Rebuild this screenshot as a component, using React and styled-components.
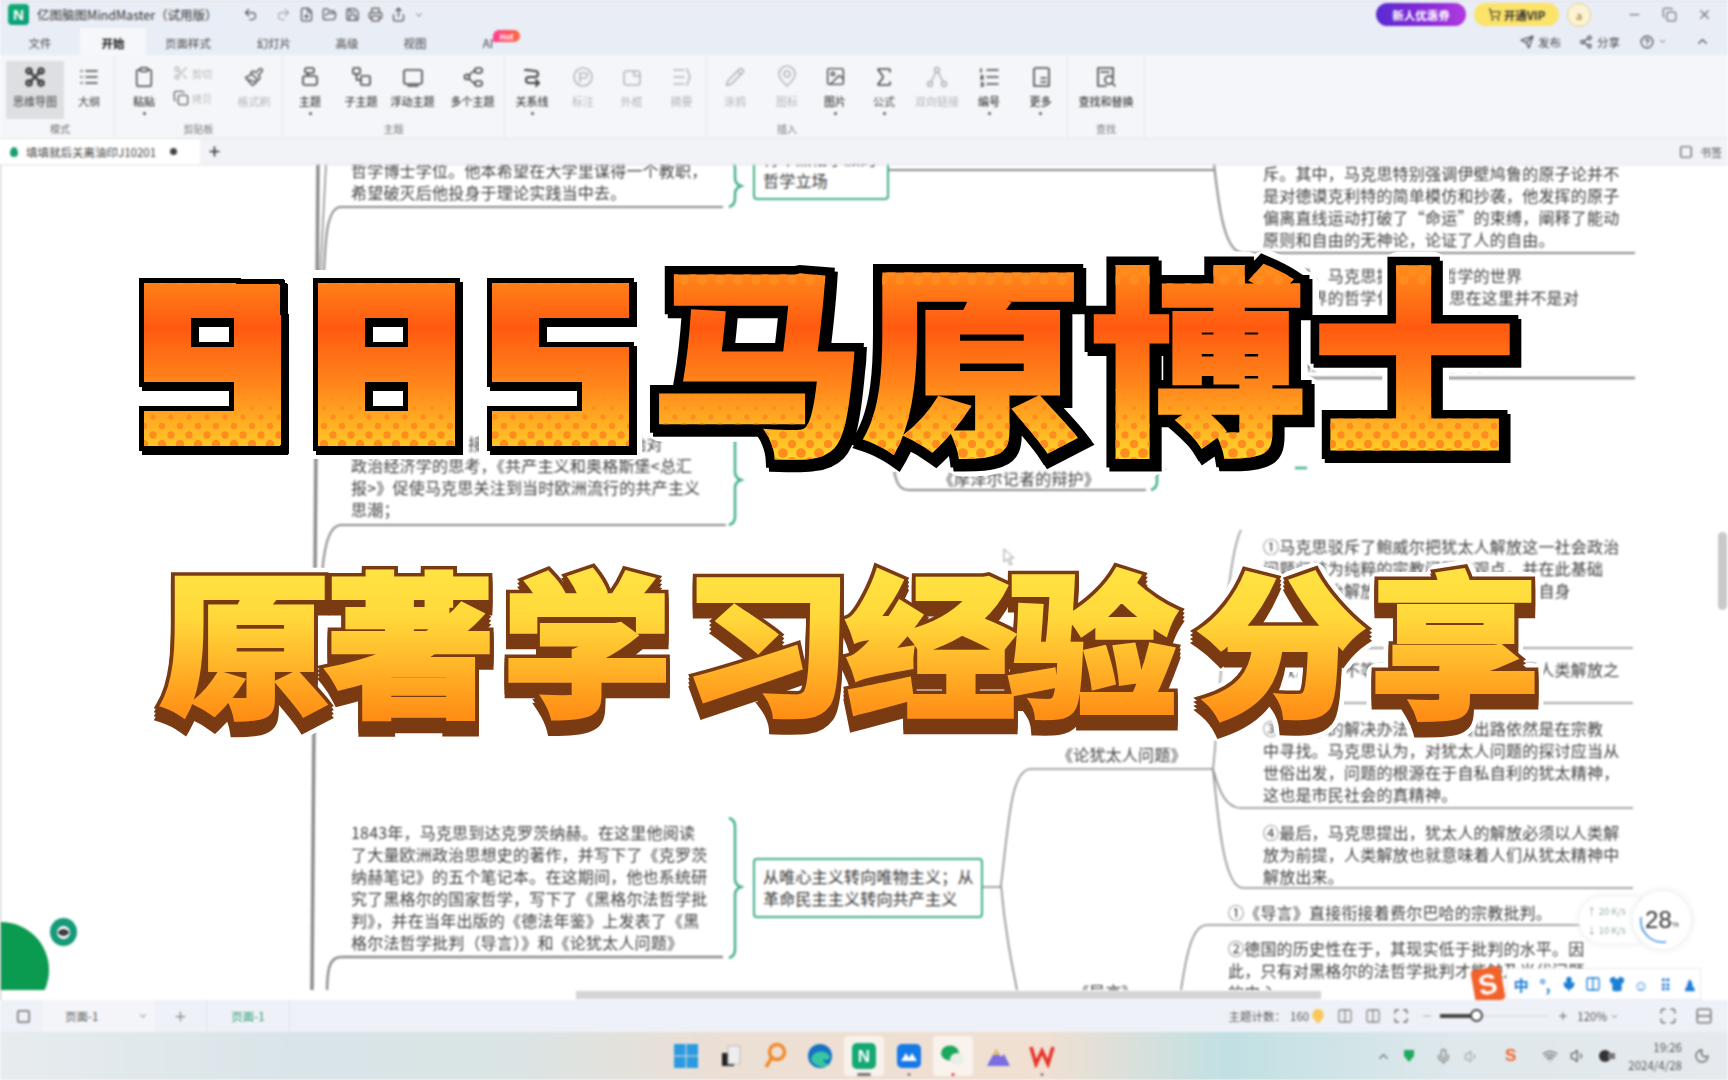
import React from 'react';
import styled, { createGlobalStyle } from 'styled-components';
import {
  Undo2, Redo2, FilePlus, FolderOpen, Save, Printer, Share, Scissors, Copy, Paintbrush, Clipboard,
  Square, List, Pencil, Image, Sigma, Send, Share2, CircleHelp, ChevronUp, Minus, X, Plus, ShoppingCart,
  Columns2, Maximize, Mic, Wifi, Volume1, Moon, ChevronDown, Shirt,
} from 'lucide-react';

const Global = createGlobalStyle`
  html, body { margin: 0; padding: 0; width: 1728px; height: 1080px; overflow: hidden; background: #fff; }
  body { font-family: "Noto Sans CJK SC", "Noto Sans", sans-serif; color: #444; }
  #root { position: relative; width: 1728px; height: 1080px; }
`;

const Shell = styled.div`
  width: 1728px; height: 1080px; display: flex; flex-direction: column;
  filter: blur(0.9px);
  overflow: hidden;
`;

/* ---------- title bar ---------- */
const TitleBar = styled.header`
  height: 28px; flex: none; background: #e9edf5; display: flex; align-items: center;
  padding: 0 0 0 8px; border-top: 1px solid #d6d9e0; box-sizing: border-box;
`;
const Logo = styled.div`
  width: 21px; height: 21px; border-radius: 4px; background: linear-gradient(135deg,#0fae6e,#0c9c80);
  color: #fff; font: 700 15px "Liberation Sans", sans-serif; display: flex; align-items: center; justify-content: center;
`;
const AppName = styled.span`font-size: 12.5px; color: #333; margin-left: 8px; width: 206px; white-space: nowrap;`;
const Quick = styled.div`display: flex; align-items: center; gap: 8px; color: #555;`;
const Spacer = styled.div`flex: 1;`;
const Pill = styled.div`
  height: 23px; width: ${p => p.$w}px; border-radius: 12px; display: flex; align-items: center; justify-content: center; gap: 3px;
  font-size: 11.5px; font-weight: 700; margin-right: 8px;
  background: ${p => p.$bg}; color: ${p => p.$fg};
`;
const Avatar = styled.div`
  width: 24px; height: 24px; border-radius: 50%; background: #fbf3d4; border: 1px solid #e5cf8a; box-sizing: border-box;
  color: #a5741c; font-size: 11px; display: flex; align-items: center; justify-content: center; margin-right: 36px;
`;
const WinBtns = styled.div`display: flex; gap: 20px; color: #777; margin-right: 16px;`;

/* ---------- menu tabs ---------- */
const MenuBar = styled.nav`
  height: 27px; flex: none; background: #e9edf5; display: flex; align-items: stretch; position: relative;
`;
const MenuTab = styled.div`
  width: ${p => p.$w}px; display: flex; align-items: center; justify-content: center; font-size: 11.5px; padding-top: 3px; box-sizing: border-box;
  color: ${p => p.$on ? '#111' : '#444'}; font-weight: ${p => p.$on ? 700 : 400};
  background: ${p => p.$on ? '#f6f7fa' : 'transparent'}; position: relative;
`;
const Hot = styled.span`
  position: absolute; left: 39px; top: 2px; width: 27px; height: 12px; border-radius: 6px 6px 6px 0;
  background: linear-gradient(90deg,#ff3d8f,#ff6a3c); color: #fff; font-size: 8px; font-weight: 700;
  display: flex; align-items: center; justify-content: center;
`;
const MenuRight = styled.div`
  margin-left: auto; display: flex; align-items: center; gap: 6px; font-size: 11.5px; color: #444; padding-right: 18px;
`;
const MenuAct = styled.span`display: flex; align-items: center; gap: 4px; margin-left: ${p => p.$ml || 0}px;`;

/* ---------- ribbon ---------- */
const Ribbon = styled.section`
  height: 83px; flex: none; background: #f5f6f9; display: flex; border-bottom: 1px solid #e4e6ea; box-sizing: content-box;
`;
const Group = styled.div`
  width: ${p => p.$w}px; flex: none; box-sizing: border-box; display: flex; flex-direction: column;
  border-right: 1px solid #e6e7ea;
  padding-left: ${p => p.$pl || 0}px;
`;
const GroupItems = styled.div`display: flex; height: 60px; padding-top: 6px; box-sizing: content-box;`;
const GroupName = styled.div`
  font-size: 10px; color: #777; height: 15px; line-height: 15px; text-align: ${p => p.$at ? 'left' : 'center'};
  padding-left: ${p => p.$at || 0}px;
`;
const Tool = styled.div`
  width: ${p => p.$w}px; height: 58px; flex: none; display: flex; flex-direction: column; align-items: center; padding-top: 2px; box-sizing: border-box;
  color: ${p => p.$off ? '#b4b6ba' : '#444'}; background: ${p => p.$on ? '#dedfe2' : 'transparent'};
  font-size: 11px; line-height: 14px; position: relative;
`;
const ToolIcon = styled.div`height: 27px; display: flex; align-items: center; justify-content: center;`;
const ToolLabel = styled.div`margin-top: 4px; white-space: nowrap; font-weight: ${p => p.$b ? 500 : 400};`;
const Caret = styled.i`display: block; width: 3px; height: 3px; border-radius: 50%; background: #555; margin-top: 4px;`;
const SmallStack = styled.div`width: 52px; flex: none; display: flex; flex-direction: column; gap: 9px; padding-top: 4px; color: #aaa;`;
const SmallRow = styled.div`display: flex; align-items: center; gap: 3px; font-size: 10px; color: #bbb;`;

/* ---------- doc tabs ---------- */
const DocBar = styled.div`
  height: 25px; flex: none; background: #f1f3f7; display: flex; align-items: center; box-shadow: 0 1px 2px #e4e4e4; position: relative; z-index: 1;
`;
const DocTab = styled.div`
  width: 200px; height: 25px; background: #fff; display: flex; align-items: center; padding-left: 10px; gap: 8px; box-sizing: border-box; font-size: 11.5px; color: #444; white-space: nowrap;
`;
const Drop = styled.i`width: 8px; height: 10px; background: #19a06e; border-radius: 50% 50% 50% 50% / 60% 60% 40% 40%; display: block;`;
const Dot = styled.i`width: 7px; height: 7px; background: #444; border-radius: 50%; display: block; margin-left: 6px;`;
const DocRight = styled.div`margin-left: auto; display: flex; align-items: center; gap: 7px; padding-right: 6px; font-size: 11px; color: #555;`;

/* ---------- canvas ---------- */
const Canvas = styled.main`
  flex: 1; position: relative; overflow: hidden; background: #fff; border-left: 1.5px solid #bdbdbd; box-sizing: border-box;
`;
const MapLines = styled.svg`position: absolute; left: 0; top: 0; width: 1728px; height: 836px;`;
const Note = styled.div`
  position: absolute; left: ${p => p.$x}px; top: ${p => p.$y - 175}px; white-space: nowrap;
  font-size: 16px; line-height: 22px; letter-spacing: 0.2px; color: #3f3f3f;
`;
const TopicBox = styled.div`
  position: absolute; left: ${p => p.$x}px; top: ${p => p.$y - 164}px; width: ${p => p.$w}px; height: ${p => p.$h}px;
  border: 2.5px solid #3fae88; border-radius: 4px; box-sizing: border-box; background: #fff;
  padding: 5px 8px; font-size: 16px; line-height: 22px; letter-spacing: 0.2px; color: #333; white-space: nowrap;
`;
const HScroll = styled.div`position: absolute; left: 575px; top: 827px; width: 745px; height: 8px; background: #d4d4d4;`;
const VScroll = styled.div`position: absolute; left: 1717px; top: 368px; width: 9px; height: 78px; background: #c9c9c9; border-radius: 5px;`;
const GreenFan = styled.div`
  position: absolute; left: -48px; top: 758px; width: 96px; height: 96px; border-radius: 50%; background: #0a9a50;
`;
const FanCover = styled.div`position: absolute; left: 0; top: 826px; width: 100%; height: 10px; background: #fff;`;
const GreenBadge = styled.div`
  position: absolute; left: 49px; top: 754px; width: 27px; height: 28px; border-radius: 50%; background: #159a7a;
  display: flex; align-items: center; justify-content: center;
  &::after { content: ""; width: 13px; height: 13px; border-radius: 50%; background: #fff; box-shadow: inset 0 3px 0 #fff, inset 0 -3px 0 #fff, inset 0 0 0 6px #333; }
`;
const Speed = styled.div`
  position: absolute; left: 1578px; top: 726px; width: 112px; height: 60px; display: flex; align-items: center;
`;
const SpeedRates = styled.div`
  width: 60px; height: 46px; border-radius: 23px 0 0 23px; background: #fff; box-shadow: 0 0 8px #e8e8e8;
  font-size: 9.5px; color: #9aa; display: flex; flex-direction: column; justify-content: center; gap: 5px; padding-left: 8px; box-sizing: border-box; white-space: nowrap;
`;
const SpeedDial = styled.div`
  width: 58px; height: 58px; margin-left: -6px; border-radius: 50%; background: #fff; box-shadow: 0 0 8px #e4e4e4; position: relative;
  display: flex; align-items: center; justify-content: center; font: 400 24px "Liberation Sans", sans-serif; color: #333;
  small { font-size: 8px; margin-top: 8px; }
`;
const DialArc = styled.svg`position: absolute; inset: 0;`;
const Ime = styled.div`
  position: absolute; left: 1505px; top: 804px; width: 195px; height: 32px; background: #fff; border: 1px solid #e4ebf5; box-sizing: border-box;
  display: flex; align-items: center; gap: 6px; padding-left: 5px; color: #1e7fd6; font-size: 15px; font-weight: 700;
  & > * { width: 18px; text-align: center; flex: none; }
`;
const Sogou = styled.div`
  position: absolute; left: 1472px; top: 804px; width: 30px; height: 34px; background: #f2622a; color: #fff; border-radius: 4px; transform: rotate(-10deg);
  font: 700 28px "Liberation Sans", sans-serif; display: flex; align-items: center; justify-content: center;
`;
const Cursor = styled.svg`position: absolute; left: 1002px; top: 384px;`;

/* ---------- status bar ---------- */
const StatusBar = styled.footer`
  height: 32px; flex: none; background: #eef1f7; display: flex; align-items: center; font-size: 11.5px; color: #555;
`;
const PageSelect = styled.div`
  margin-left: 12px; width: 112px; height: 32px; background: #f4f5f8; display: flex; align-items: center; padding: 0 7px 0 22px; box-sizing: border-box; justify-content: space-between;
`;
const PagePlus = styled.div`width: 52px; display: flex; justify-content: center; color: #888; border-right: 1px solid #e0e2e8; height: 32px; align-items: center; box-sizing: border-box;`;
const PageTab = styled.div`width: 83px; text-align: center; color: #2a9a72; border-right: 1px solid #e0e2e8; height: 32px; line-height: 32px; box-sizing: border-box;`;
const StatusRight = styled.div`margin-left: auto; display: flex; align-items: center; padding-right: 15px;`;
const Slider = styled.div`
  width: 110px; height: 2px; background: #e2e4e9; position: relative; margin: 0 7px;
  &::before { content: ""; position: absolute; left: 0; top: -1px; width: 34px; height: 4px; background: #444; }
  &::after { content: ""; position: absolute; left: 30px; top: -6px; border-radius: 50%; background: #fff; border: 2px solid #444; box-sizing: border-box; width: 13px; height: 13px; }
`;

/* ---------- task bar ---------- */
const TaskBar = styled.footer`
  height: 48px; flex: none; display: flex; align-items: center; position: relative;
  background: linear-gradient(90deg,#e8ecef 0%,#d8e4e8 18%,#dae4e4 30%,#ecdfd4 42%,#f1e0d2 60%,#c1e0e3 71%,#dfe8ec 84%,#e6eaee 100%);
`;
const TaskApps = styled.div`margin-left: 666px; display: flex; align-items: center; gap: 4.5px;`;
const AppSlot = styled.div`
  width: 40px; height: 40px; display: flex; align-items: center; justify-content: center; position: relative;
  background: ${p => p.$on ? 'rgba(255,255,255,.6)' : 'transparent'}; border-radius: 4px;
  &::after { content: ""; display: ${p => p.$mark ? 'block' : 'none'}; position: absolute; bottom: 0; left: 50%; transform: translateX(-50%);
    width: ${p => p.$mark === 'bar' ? 14 : 3}px; height: 3px; border-radius: 2px; background: ${p => p.$mark === 'red' ? '#d33' : '#777'}; }
`;
const Tray = styled.div`margin-left: auto; display: flex; align-items: center; gap: 12px; color: #666; padding-right: 18px;`;
const Clock = styled.div`font-size: 11.5px; line-height: 18px; text-align: right; color: #555; white-space: nowrap;`;

/* ---------- poster title ---------- */
const Poster = styled.svg`
  position: absolute; left: 0; top: 0; width: 1728px; height: 1080px; pointer-events: none;
  font-family: "Noto Sans CJK SC", sans-serif; font-weight: 900;
`;

const Ico = ({ children, s = 24, c = 'currentColor', w = 1.6 }) => (
  <svg width={s} height={s} viewBox="0 0 24 24" fill="none" stroke={c} strokeWidth={w} strokeLinecap="round" strokeLinejoin="round">{children}</svg>
);

const tools = {
  mind: <Ico w={2.6} c="#444"><path d="M7 7l10 10M17 7L7 17" /><circle cx="6" cy="6" r="2.5" /><circle cx="18" cy="6" r="2.5" /><circle cx="6" cy="18" r="2.5" /><circle cx="18" cy="18" r="2.5" /></Ico>,
  outline: <Ico><path d="M9 6h11M9 12h11M9 18h11" /><path d="M4 6h1M4 12h1M4 18h1" /></Ico>,
  topic: <Ico><rect x="7" y="3" width="9" height="5" rx="1.5" /><path d="M10 8v3" /><rect x="5" y="11" width="14" height="9" rx="2" /></Ico>,
  sub: <Ico><rect x="4" y="3" width="7" height="6" rx="1" /><path d="M7.5 9v6h4" /><rect x="12" y="11" width="9" height="9" rx="1" /></Ico>,
  float: <Ico><rect x="3" y="5" width="18" height="14" rx="2" /><path d="M7 21h10" /></Ico>,
  multi: <Ico><circle cx="6" cy="12" r="2.5" /><rect x="14" y="3" width="7" height="5" rx="2" /><rect x="14" y="16" width="7" height="5" rx="2" /><path d="M8 10l6-5M8 14l6 5" /></Ico>,
  rel: <Ico w={2}><path d="M5 5h2l8 1a3 3 0 0 1 0 6H9a3 3 0 0 0 0 6h9" /><path d="M16 15l3 3-3 3" /></Ico>,
  callout: <Ico><circle cx="12" cy="12" r="9" /><path d="M9 8h5a2 2 0 0 1 0 5H9zM9 8v9" /></Ico>,
  box: <Ico><rect x="4" y="6" width="16" height="14" rx="3" /><path d="M14 6v5h6" /></Ico>,
  summary: <Ico><path d="M4 5h10M4 12h10M4 19h10" /><path d="M17 4l3 8-3 8" /></Ico>,
  pin: <Ico><path d="M12 21c-5-5-8-8-8-12a8 8 0 0 1 16 0c0 4-3 7-8 12z" /><circle cx="12" cy="9" r="3" /></Ico>,
  link: <Ico><circle cx="12" cy="5" r="2.4" /><circle cx="5" cy="19" r="2.4" /><circle cx="19" cy="19" r="2.4" /><path d="M11 7l-5 10M13 7l5 10" /></Ico>,
  numbers: <Ico><path d="M10 5h11M10 12h11M10 19h11" /><path d="M4 4v3M4 11h2l-2 3h2M4 18h2v3H4" /></Ico>,
  more: <Ico><path d="M5 21V5a2 2 0 0 1 2-2h11a2 2 0 0 1 2 2v16z" /><path d="M12 13h5M12 17h5" /></Ico>,
  find: <Ico><path d="M4 3h15v9M4 3v18h8" /><path d="M7 7h8" /><circle cx="15" cy="15" r="4" /><path d="M18 18l3 3" /></Ico>,
};

const Item = ({ w, icon, label, on, off, caret, b }) => (
  <Tool $w={w} $on={on} $off={off}>
    <ToolIcon>{icon}</ToolIcon>
    <ToolLabel $b={b}>{label}</ToolLabel>
    {caret && <Caret />}
  </Tool>
);

const Text = ({ x, y, lines }) => <Note $x={x} $y={y}>{lines.map(l => <div key={l}>{l}</div>)}</Note>;

const Gray = '#8b8b8b';
const Green = '#3fae88';
const Rule = ({ d, w = 2 }) => <path d={d} stroke={Gray} strokeWidth={w} fill="none" />;
const Brace = ({ x, y1, y2, tip }) => (
  <path d={`M${x} ${y1}q6 2 6 8V${tip - 8}q0 6 6 8q-6 2 -6 8V${y2 - 8}q0 6 -6 8`} stroke={Green} strokeWidth="2.4" fill="none" />
);

const MindLines = () => (
  <MapLines viewBox="0 164 1728 836">
    <Rule d="M317 164L311 990" w={3.5} />
    <Rule d="M325 164L318 300" w={1.5} />
    <Rule d="M322 296C324 240 325 207 340 207H722" />
    <Brace x={728} y1={160} y2={207} tip={186} />
    <Rule d="M888 170H1213" />
    <Rule d="M1213 164C1218 210 1224 253 1242 253H1634" />
    <Rule d="M1220 262C1224 300 1226 378 1242 378H1634" w={2.5} />
    <Rule d="M318 640C320 570 322 525 340 525H725" />
    <Brace x={728} y1={400} y2={525} tip={480} />
    <Rule d="M893 470C895 482 898 490 908 490H1145" />
    <Brace x={1150} y1={445} y2={490} tip={468} />
    <path d="M1294 468H1306" stroke={Green} strokeWidth="2.4" />
    <Rule d="M1225 648H1632" w={1.6} />
    <Rule d="M1225 703H1632" w={1.6} />
    <Rule d="M1212 769C1218 720 1224 560 1240 530" w={1.5} />
    <Rule d="M1212 769C1218 790 1224 808 1240 808H1632" w={1.6} />
    <Rule d="M1212 769C1218 830 1224 888 1242 888H1632" w={1.6} />
    <Rule d="M1000 885C1008 820 1010 769 1030 769H1212" w={1.6} />
    <Rule d="M1000 885C1004 930 1010 960 1016 990" w={1.6} />
    <Rule d="M982 887H1000" w={1.6} />
    <Rule d="M1180 990C1186 950 1192 925 1206 925H1590" w={1.6} />
    <Rule d="M326 995C326 970 328 957 340 957H722" w={2.4} />
    <Brace x={728} y1={818} y2={958} tip={887} />
  </MapLines>
);

const Hall = () => (
  <Canvas>
    <MindLines />
    <Text x={350} y={170} lines={['哲学博士学位。他本希望在大学里谋得一个教职，', '希望破灭后他投身于理论实践当中去。']} />
    <TopicBox $x={752} $y={140} $w={136} $h={60}>
      <div>青年黑格尔派的</div>
      <div>哲学立场</div>
    </TopicBox>
    <Text x={1262} y={173} lines={['斥。其中，马克思特别强调伊壁鸠鲁的原子论并不', '是对德谟克利特的简单模仿和抄袭，他发挥的原子', '偏离直线运动打破了“命运”的束缚，阐释了能动', '原则和自由的无神论，论证了人的自由。']} />
    <Text x={1262} y={275} lines={['在这里，马克思提出了“哲学的世界', '化，世界的哲学化”。马克思在这里并不是对', '世界的简单解释，强调哲学的“改', '变世界”，这就是伊壁鸠鲁对原子', '《偏斜》来说明的一个学习的手段']} />
    <Text x={350} y={443} lines={['1842年，马克思接触到社会主义信息开始对', '政治经济学的思考，《共产主义和奥格斯堡<总汇', '报>》促使马克思关注到当时欧洲流行的共产主义', '思潮；']} />
    <Text x={937} y={478} lines={['《摩泽尔记者的辩护》']} />
    <Text x={1262} y={546} lines={['①马克思驳斥了鲍威尔把犹太人解放这一社会政治', '问题归结为纯粹的宗教问题的观点，并在此基础', '上指出政治解放的限度，宗教是把宗教自身']} />
    <Text x={1262} y={669} lines={['②政治解放不等于人类解放，前者只是人类解放之']} />
    <Text x={1262} y={728} lines={['③鲍威尔的解决办法错误，其出路依然是在宗教', '中寻找。马克思认为，对犹太人问题的探讨应当从', '世俗出发，问题的根源在于自私自利的犹太精神，', '这也是市民社会的真精神。']} />
    <Text x={1262} y={832} lines={['④最后，马克思提出，犹太人的解放必须以人类解', '放为前提，人类解放也就意味着人们从犹太精神中', '解放出来。']} />
    <Text x={1056} y={754} lines={['《论犹太人问题》']} />
    <Text x={1227} y={912} lines={['①《导言》直接衔接着费尔巴哈的宗教批判。']} />
    <Text x={1227} y={948} lines={['②德国的历史性在于，其现实低于批判的水平。因', '此，只有对黑格尔的法哲学批判才能触及当代问题', '的中心。']} />
    <Text x={1072} y={991} lines={['《导言》']} />
    <Text x={350} y={832} lines={['1843年，马克思到达克罗茨纳赫。在这里他阅读', '了大量欧洲政治思想史的著作，并写下了《克罗茨', '纳赫笔记》的五个笔记本。在这期间，他也系统研', '究了黑格尔的国家哲学，写下了《黑格尔法哲学批', '判》，并在当年出版的《德法年鉴》上发表了《黑', '格尔法哲学批判（导言）》和《论犹太人问题》']} />
    <TopicBox $x={752} $y={858} $w={230} $h={60}>
      <div>从唯心主义转向唯物主义；从</div>
      <div>革命民主主义转向共产主义</div>
    </TopicBox>
    <GreenFan />
    <GreenBadge />
    <FanCover />
    <HScroll />
    <VScroll />
    <Cursor width="14" height="18" viewBox="0 0 14 18"><path d="M1 1v13l3-3 3 6 2-1-3-6h5z" fill="#fff" stroke="#999" /></Cursor>
    <Speed>
      <SpeedRates>
        <span>↑ 20 K/s</span>
        <span>↓ 10 K/s</span>
      </SpeedRates>
      <SpeedDial>
        <DialArc width="58" height="58" viewBox="0 0 58 58"><path d="M8 26A22 22 0 0 0 33 51" stroke="#4a90e2" strokeWidth="1.6" fill="none" /></DialArc>
        28<small>%</small>
      </SpeedDial>
    </Speed>
    <Ime>
      <span>中</span><span>°,</span><Mic size={16} fill="#1e7fd6" /><Columns2 size={16} /><Shirt size={16} fill="#1e7fd6" /><span>☺</span><span>⠿</span><span>♟</span>
    </Ime>
    <Sogou>S</Sogou>
  </Canvas>
);

const Tile = ({ children, on, mark }) => <AppSlot $on={on} $mark={mark}>{children}</AppSlot>;
const TaskIcons = [
  { k: 'win', e: <svg width="26" height="26" viewBox="0 0 26 26"><g fill="#2b9ae0"><rect x="1" y="1" width="11.5" height="11.5" /><rect x="13.5" y="1" width="11.5" height="11.5" /><rect x="1" y="13.5" width="11.5" height="11.5" /><rect x="13.5" y="13.5" width="11.5" height="11.5" /></g></svg> },
  { k: 'files', e: <svg width="24" height="24" viewBox="0 0 24 24"><rect x="3" y="9" width="12" height="13" fill="#222" /><rect x="9" y="2" width="12" height="18" fill="#eee" stroke="#bbb" /></svg> },
  { k: 'search', e: <svg width="26" height="28" viewBox="0 0 26 28" fill="none" stroke="#ef8a2a" strokeWidth="3.4"><circle cx="15" cy="10" r="7.5" /><path d="M9.5 16L4 25" /></svg> },
  { k: 'edge', e: <svg width="26" height="26" viewBox="0 0 26 26"><circle cx="13" cy="13" r="12" fill="#1570c4" /><path d="M4 16c2-9 16-10 19-2 0 3-5 4-7 2 1 5 5 6 8 4-4 6-17 5-20-4z" fill="#37c7a0" /></svg> },
  { k: 'mm', on: true, mark: 'bar', e: <svg width="26" height="28" viewBox="0 0 26 28"><rect x="1" y="1" width="24" height="26" rx="5" fill="#13a874" /><text x="13" y="20" textAnchor="middle" fontSize="17" fontWeight="700" fill="#fff" fontFamily="Liberation Sans">N</text></svg> },
  { k: 'pic', mark: 'dot', e: <svg width="26" height="26" viewBox="0 0 26 26"><rect x="1" y="1" width="24" height="24" rx="5" fill="#1679e8" /><path d="M5 18l5-8 3 5 3-5 5 8z" fill="#fff" /></svg> },
  { k: 'wx', mark: 'red', on: true, e: <svg width="26" height="26" viewBox="0 0 26 26"><ellipse cx="10" cy="10" rx="9" ry="7.5" fill="#19a85c" /><ellipse cx="17" cy="16" rx="7" ry="6" fill="#e9eee6" /></svg> },
  { k: 'mt', e: <svg width="26" height="26" viewBox="0 0 26 26"><path d="M2 23L11 6l5 8 3-3 6 12z" fill="#7a6ee0" /><path d="M11 6l-3 6h6z" fill="#f5c43c" /></svg> },
  { k: 'wps', mark: 'dot', e: <svg width="26" height="24" viewBox="0 0 26 24" fill="none" stroke="#e8352a" strokeWidth="3.6"><path d="M2 3l5 17 6-13 6 13 5-17" /></svg> },
];

const Chrome = () => (
  <>
    <TitleBar>
      <Logo>N</Logo>
      <AppName>亿图脑图MindMaster（试用版）</AppName>
      <Quick>
        <Undo2 size={15} /><Redo2 size={15} color="#aaa" style={{ marginLeft: 10 }} />
        <FilePlus size={15} /><FolderOpen size={15} /><Save size={15} /><Printer size={15} /><Share size={15} />
        <ChevronDown size={10} />
      </Quick>
      <Spacer />
      <Pill $w={90} $bg="linear-gradient(90deg,#5a2bd0,#8b2bd8 60%,#b13be0)" $fg="#fff">新人优惠券</Pill>
      <Pill $w={85} $bg="#fce36a" $fg="#333"><ShoppingCart size={13} />开通VIP</Pill>
      <Avatar>a</Avatar>
      <WinBtns><Minus size={15} /><Copy size={15} /><X size={15} /></WinBtns>
    </TitleBar>
    <MenuBar>
      <MenuTab $w={80}>文件</MenuTab>
      <MenuTab $w={66} $on>开始</MenuTab>
      <MenuTab $w={84}>页面样式</MenuTab>
      <MenuTab $w={88}>幻灯片</MenuTab>
      <MenuTab $w={58}>高级</MenuTab>
      <MenuTab $w={78}>视图</MenuTab>
      <MenuTab $w={68}>AI<Hot>Hot</Hot></MenuTab>
      <MenuRight>
        <MenuAct><Send size={14} />发布</MenuAct>
        <MenuAct $ml={12}><Share2 size={14} />分享</MenuAct>
        <MenuAct $ml={14}><CircleHelp size={14} /><ChevronDown size={9} /></MenuAct>
        <MenuAct $ml={22}><ChevronUp size={15} /></MenuAct>
      </MenuRight>
    </MenuBar>
    <Ribbon>
      <Group $w={115} $pl={6}>
        <GroupItems>
          <Item w={58} on icon={tools.mind} label="思维导图" />
          <Item w={50} icon={tools.outline} label="大纲" />
        </GroupItems>
        <GroupName>模式</GroupName>
      </Group>
      <Group $w={168}>
        <GroupItems>
          <Item w={58} icon={<Clipboard size={22} strokeWidth={1.6} />} label="粘贴" caret b />
          <SmallStack>
            <SmallRow><Scissors size={16} />剪切</SmallRow>
            <SmallRow><Copy size={16} color="#666" />拷贝</SmallRow>
          </SmallStack>
          <Item w={58} off icon={<Paintbrush size={20} color="#666" />} label="格式刷" />
        </GroupItems>
        <GroupName>剪贴板</GroupName>
      </Group>
      <Group $w={222}>
        <GroupItems>
          <Item w={54} icon={tools.topic} label="主题" caret b />
          <Item w={48} icon={tools.sub} label="子主题" b />
          <Item w={55} icon={tools.float} label="浮动主题" b />
          <Item w={65} icon={tools.multi} label="多个主题" b />
        </GroupItems>
        <GroupName>主题</GroupName>
      </Group>
      <Group $w={202}>
        <GroupItems>
          <Item w={54} icon={tools.rel} label="关系线" caret b />
          <Item w={48} off icon={tools.callout} label="标注" />
          <Item w={49} off icon={tools.box} label="外框" />
          <Item w={51} off icon={tools.summary} label="摘要" />
        </GroupItems>
        <GroupName />
      </Group>
      <Group $w={361}>
        <GroupItems>
          <Item w={56} off icon={<Pencil size={20} />} label="涂鸦" />
          <Item w={48} off icon={tools.pin} label="图标" />
          <Item w={48} icon={<Image size={21} strokeWidth={1.6} />} label="图片" caret b />
          <Item w={50} icon={<Sigma size={24} strokeWidth={1.6} />} label="公式" caret />
          <Item w={56} off icon={tools.link} label="双向链接" />
          <Item w={48} icon={tools.numbers} label="编号" caret b />
          <Item w={55} icon={tools.more} label="更多" caret b />
        </GroupItems>
        <GroupName $at={70}>插入</GroupName>
      </Group>
      <Group $w={77}>
        <GroupItems>
          <Item w={76} icon={tools.find} label="查找和替换" b />
        </GroupItems>
        <GroupName>查找</GroupName>
      </Group>
    </Ribbon>
    <DocBar>
      <DocTab><Drop />填填就后关离油印J10201<Dot /></DocTab>
      <Plus size={15} style={{ marginLeft: 7 }} color="#333" strokeWidth={2.5} />
      <DocRight><Square size={14} />书签</DocRight>
    </DocBar>
    <Hall />
    <StatusBar>
      <Square size={15} style={{ marginLeft: 16 }} />
      <PageSelect>页面-1<ChevronDown size={10} /></PageSelect>
      <PagePlus><Plus size={15} /></PagePlus>
      <PageTab>页面-1</PageTab>
      <StatusRight>
        <span>主题计数：</span>
        <span style={{ marginLeft: 4 }}>160</span>
        <svg width="14" height="16" viewBox="0 0 14 16" style={{ marginLeft: 2, marginRight: 12 }}><path d="M7 1a6 6 0 0 1 3 11l-2 3H6l-2-3A6 6 0 0 1 7 1z" fill="#fbc85a" /></svg>
        <Columns2 size={16} color="#888" style={{ marginRight: 12 }} />
        <Columns2 size={16} color="#888" style={{ marginRight: 12 }} />
        <Maximize size={16} color="#666" style={{ marginRight: 12 }} />
        <Minus size={12} color="#aaa" />
        <Slider />
        <Plus size={12} color="#666" />
        <span style={{ marginLeft: 8 }}>120%</span>
        <ChevronDown size={9} style={{ marginLeft: 3, marginRight: 40 }} />
        <Maximize size={18} color="#777" style={{ marginRight: 18 }} />
        <Columns2 size={18} color="#777" style={{ transform: 'rotate(90deg)' }} />
      </StatusRight>
    </StatusBar>
    <TaskBar>
      <TaskApps>
        {TaskIcons.map(t => <Tile key={t.k} on={t.on} mark={t.mark}>{t.e}</Tile>)}
      </TaskApps>
      <Tray>
        <ChevronUp size={15} />
        <svg width="12" height="14" viewBox="0 0 12 14"><path d="M1 1h10v6l-5 6-5-6z" fill="#1fa85f" /></svg>
        <Mic size={17} style={{ marginLeft: 8 }} color="#888" />
        <Volume1 size={15} color="#aaa" />
        <span style={{ color: '#f2622a', fontWeight: 700, fontSize: 17, margin: '0 14px', fontFamily: 'Liberation Sans' }}>S</span>
        <Wifi size={16} />
        <Volume1 size={16} />
        <svg width="18" height="14" viewBox="0 0 18 14"><circle cx="7" cy="7" r="6" fill="#333" /><rect x="10" y="4" width="7" height="6" fill="#777" /></svg>
        <Clock><div>19:26</div><div>2024/4/28</div></Clock>
        <Moon size={16} />
      </Tray>
    </TaskBar>
  </>
);

/* Poster title: each glyph is real text once; the outline, extrusion and halo layers repeat it with <use> */
const hans1 = [
  { c: '马', x: 650, l: 214 },
  { c: '原', x: 862, l: 220 },
  { c: '博', x: 1090, l: 216 },
  { c: '士', x: 1312, l: 204 },
];
const hans2 = ['原', '著', '学', '习', '经', '验', '分', '享'].map((c, i) => ({
  c, x: [160, 325, 502, 682, 846, 1008, 1196, 1370][i], l: 170,
}));

/* digits: sampled on a coarse 3x5 grid so they read as the poster's block numerals */
const CellW = 45;
const CellH = 32;
const DigitTop = 284;
const digits = [
  { c: '9', x: 145, tx: -11, y: 167, fs: 230, l: 156, sw: 2 },
  { c: '8', x: 319, tx: -4, y: 153, fs: 212, l: 143, sw: 8 },
  { c: '5', x: 493, tx: -11, y: 170, fs: 230, l: 156, sw: 4 },
];

const dots = [];
for (let i = 0; i < 11; i++) {
  const y = 90 + i * 9;
  const r = 1 + Math.min(i, 7) * 0.55;
  for (let k = 0; k < 2; k++) dots.push(<circle key={`${i}-${k}`} cx={(i % 2 ? 9 : 0) + k * 18} cy={y} r={r} />);
}

const BlockFilter = ({ id, rx, ry }) => (
  <filter id={id} filterUnits="userSpaceOnUse" x="-60" y="-60" width="261" height="285" colorInterpolationFilters="sRGB">
    <feFlood x={Math.floor(CellW / 2) - 1} y={Math.floor(CellH / 2) - 1} width="3" height="3" floodColor="#000" />
    <feComposite x="0" y="0" width={CellW} height={CellH} />
    <feTile result="grid" x="0" y="0" width={CellW * 3} height={CellH * 5} />
    <feComposite in="SourceGraphic" in2="grid" operator="in" x="0" y="0" width={CellW * 3} height={CellH * 5} />
    <feComponentTransfer x="0" y="0" width={CellW * 3} height={CellH * 5}><feFuncA type="discrete" tableValues="0 0 1 1" /></feComponentTransfer>
    <feMorphology operator="dilate" radius={`${rx} ${ry}`} x="-60" y="-60" width="261" height="285" />
  </filter>
);

const Poster2 = () => (
  <Poster viewBox="0 0 1728 1080">
    <defs>
      <linearGradient id="hot" gradientUnits="userSpaceOnUse" x1="0" y1="270" x2="0" y2="462">
        <stop offset="0" stopColor="#ff8a1c" />
        <stop offset=".3" stopColor="#ff5a10" />
        <stop offset=".62" stopColor="#ff8a1c" />
        <stop offset="1" stopColor="#ffd82a" />
      </linearGradient>
      <linearGradient id="gold" gradientUnits="userSpaceOnUse" x1="0" y1="570" x2="0" y2="722">
        <stop offset="0" stopColor="#ffe342" />
        <stop offset=".32" stopColor="#ffd83a" />
        <stop offset="1" stopColor="#ff8a14" />
      </linearGradient>
      <pattern id="tone" patternUnits="userSpaceOnUse" x="0" y="300" width="18" height="200">
        <g fill="#ff8c1e">{dots}</g>
      </pattern>
      <BlockFilter id="pxFace" rx={22} ry={16} />
      <BlockFilter id="pxRim" rx={27} ry={21} />
      <BlockFilter id="pxHalo" rx={35} ry={29} />
      <mask id="digitMask" maskUnits="userSpaceOnUse" x="0" y="0" width="1728" height="1080">
        {digits.map(d => (
          <g key={d.c} transform={`translate(${d.x} ${DigitTop})`}>
            <g filter="url(#pxFace)"><use href={`#digit-${d.c}`} fill="#fff" stroke="#fff" /></g>
          </g>
        ))}
      </mask>
    </defs>

    {digits.map(d => (
      <g key={d.c} transform={`translate(${d.x} ${DigitTop})`}>
        <g filter="url(#pxHalo)"><use href={`#digit-${d.c}`} fill="#fff" stroke="#fff" /></g>
      </g>
    ))}
    {digits.map(d => (
      <g key={d.c} transform={`translate(${d.x + 3} ${DigitTop + 4})`}>
        <g filter="url(#pxRim)"><use href={`#digit-${d.c}`} fill="#000" stroke="#000" /></g>
      </g>
    ))}
    {digits.map(d => (
      <g key={d.c} transform={`translate(${d.x} ${DigitTop})`}>
        <g filter="url(#pxRim)" fill="#000" stroke="#000">
          <text id={`digit-${d.c}`} x={d.tx} y={d.y} fontSize={d.fs} textLength={d.l} lengthAdjust="spacingAndGlyphs" strokeWidth={d.sw}>{d.c}</text>
        </g>
      </g>
    ))}
    <g mask="url(#digitMask)">
      <rect x="130" y="270" width="520" height="190" fill="url(#hot)" />
      <rect x="130" y="270" width="520" height="190" fill="url(#tone)" />
    </g>

    <g fontSize="200">
      <use href="#hans1" fill="#fff" stroke="#fff" strokeWidth="34" strokeLinejoin="round" x="2" y="2" />
      <use href="#hans1" fill="#000" stroke="#000" strokeWidth="20" strokeLinejoin="miter" strokeMiterlimit="4" x="3" y="4" />
      <g fill="#000" stroke="#000" strokeWidth="20" strokeLinejoin="miter" strokeMiterlimit="4">
        <g id="hans1">
          {hans1.map(g => <text key={g.c} x={g.x} y="438" textLength={g.l} lengthAdjust="spacingAndGlyphs">{g.c}</text>)}
        </g>
      </g>
      <use href="#hans1" fill="url(#hot)" stroke="url(#hot)" strokeWidth="3" />
      <use href="#hans1" fill="url(#tone)" stroke="url(#tone)" strokeWidth="3" />
    </g>

    <g fontSize="155">
      <use href="#hans2" fill="#fff" stroke="#fff" strokeWidth="20" strokeLinejoin="round" y="12" />
      <use href="#hans2" fill="#fff" stroke="#fff" strokeWidth="20" strokeLinejoin="round" />
      <use href="#hans2" y="12" fill="#8a431c" stroke="#7a3a12" strokeWidth="11" strokeLinejoin="miter" strokeMiterlimit="4" />
      <use href="#hans2" y="8" fill="#8a431c" stroke="#7a3a12" strokeWidth="11" strokeLinejoin="miter" strokeMiterlimit="4" />
      <use href="#hans2" y="4" fill="#8a431c" stroke="#7a3a12" strokeWidth="11" strokeLinejoin="miter" strokeMiterlimit="4" />
      <g fill="#7a3a12" stroke="#7a3a12" strokeWidth="11" strokeLinejoin="miter" strokeMiterlimit="4">
        <g id="hans2">
          {hans2.map(g => <text key={g.c + g.x} x={g.x} y="704" textLength={g.l} lengthAdjust="spacingAndGlyphs">{g.c}</text>)}
        </g>
      </g>
      <use href="#hans2" fill="url(#gold)" stroke="url(#gold)" strokeWidth="4" />
    </g>
  </Poster>
);

export default function App() {
  return (
    <>
      <Global />
      <Shell><Chrome /></Shell>
      <Poster2 />
    </>
  );
}
